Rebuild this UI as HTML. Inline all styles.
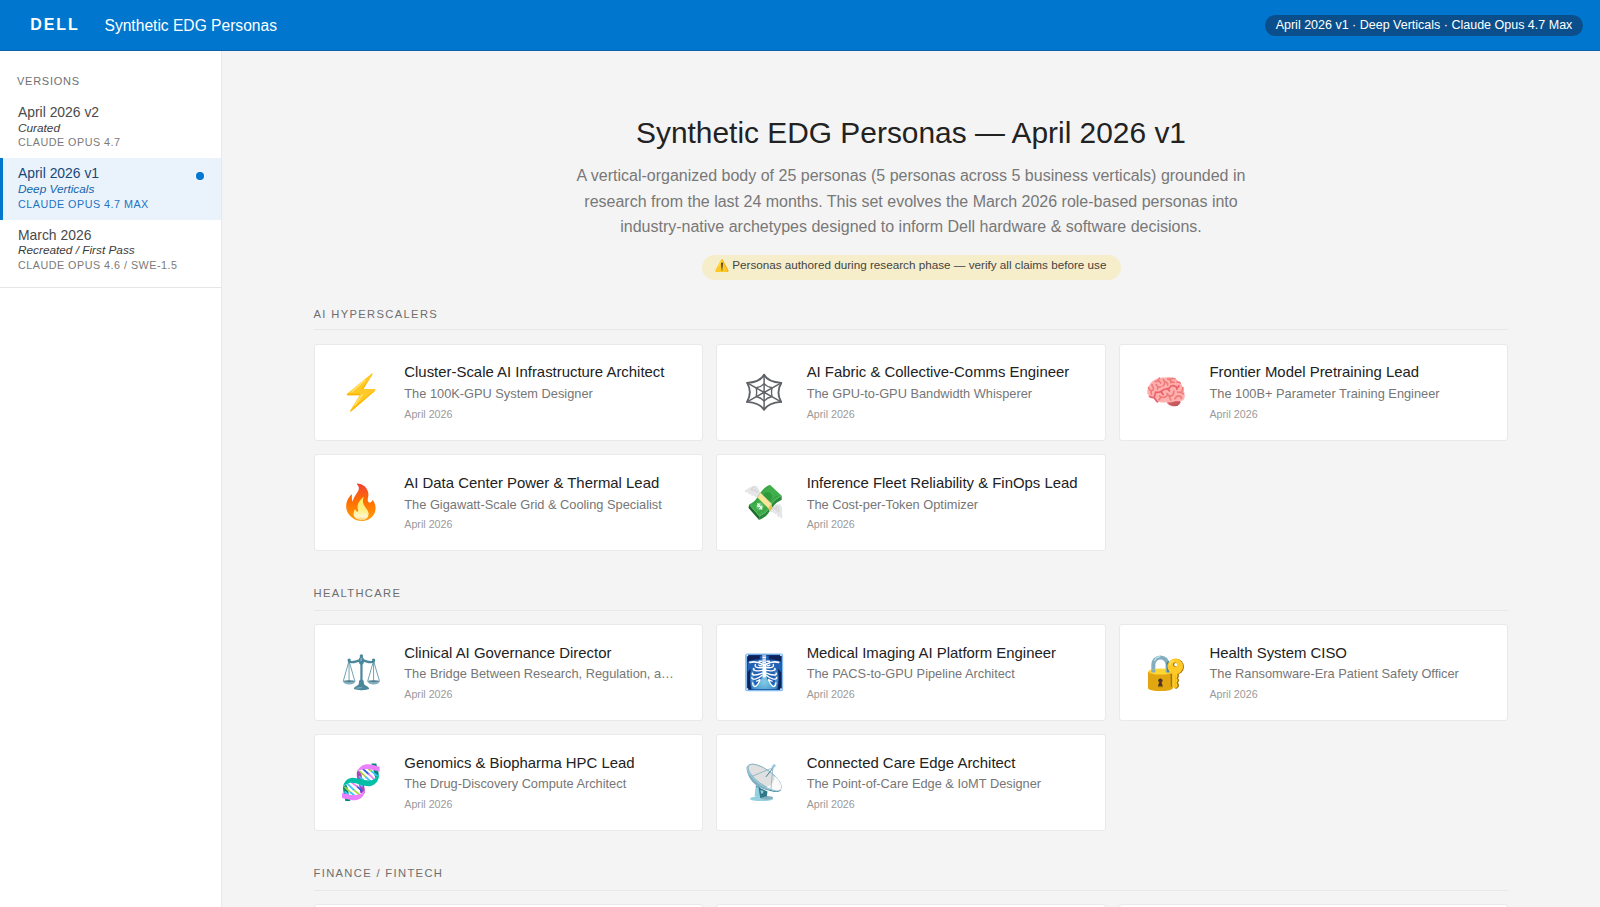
<!DOCTYPE html>
<html lang="en">
<head>
<meta charset="utf-8">
<title>Synthetic EDG Personas</title>
<style>
*{box-sizing:border-box;margin:0;padding:0}
html,body{width:1600px;height:907px;overflow:hidden}
body{font-family:"Liberation Sans",Arial,Helvetica,sans-serif;background:#f4f4f4;color:#222;position:relative}
/* ---------- header ---------- */
header{position:absolute;left:0;top:0;width:1600px;height:51px;background:#0076ce;border-bottom:1px solid #0a62a8;color:#fff;z-index:5}
.logo{position:absolute;left:30.2px;top:15.1px;font-size:16px;line-height:20px;font-weight:700;letter-spacing:1.92px;white-space:nowrap}
.apptitle{position:absolute;left:104.5px;top:15.9px;font-size:15.6px;line-height:20px;white-space:nowrap}
.pill{position:absolute;left:1265px;top:15px;width:318px;height:21px;border-radius:10.5px;background:#0a4f8b;font-size:12.5px;line-height:21.3px;text-align:center;white-space:nowrap}
/* ---------- sidebar ---------- */
aside{position:absolute;left:0;top:51px;width:222px;height:856px;background:#fff;border-right:1px solid #e9e9e9}
.vlabel{position:absolute;left:17px;top:74px;font-size:11px;line-height:14px;letter-spacing:.75px;color:#707070;white-space:nowrap}
.vitem{position:absolute;left:0;width:221px;height:61.3px;padding-left:18px;border-left:0 solid #0076ce}
.vitem b{display:block;font-weight:400;font-size:13.9px;line-height:16px;color:#4a4a4a;padding-top:7.6px;white-space:nowrap}
.vitem i{display:block;font-size:11.8px;line-height:14px;color:#3c3c3c;margin-top:0.5px;white-space:nowrap}
.vitem u{display:block;text-decoration:none;font-size:10.75px;line-height:13px;letter-spacing:.5px;color:#7a7a7a;margin-top:1.3px;white-space:nowrap}
.vitem.on{background:#eaf3fb;border-left-width:3px;padding-left:15px;height:61.7px}
.vitem.on b{padding-top:7.2px}
.vitem.on u{margin-top:2.2px}
.vitem.on b{color:#17477a}
.vitem.on i{color:#1565ac}
.vitem.on u{color:#1b74c4}
.dot{position:absolute;left:193px;top:13.8px;width:8px;height:8px;border-radius:50%;background:#0076ce}
.vend{position:absolute;left:0;top:286.5px;width:221px;height:1px;background:#e6e6e6}
/* ---------- main ---------- */
h1{position:absolute;left:222px;top:115.2px;width:1378px;text-align:center;font-size:29.9px;line-height:36px;font-weight:400;color:#222;white-space:nowrap}
.desc{position:absolute;left:222px;top:163.3px;width:1378px;text-align:center;font-size:16px;line-height:25.5px;color:#787878;white-space:nowrap}
.warn{position:absolute;left:701.5px;top:254.6px;width:419px;height:25px;border-radius:13px;background:#f6edca;color:#444;font-size:11.7px;line-height:26px;white-space:nowrap}
.warn span{position:absolute;left:30.7px;top:-2.4px}
.warn svg{position:absolute;left:13.2px;top:3.1px;width:14.6px;height:14.6px}
.sec{position:absolute;left:314px;width:1194px}
.sec h2{font-size:11.2px;line-height:14px;font-weight:400;letter-spacing:1.344px;color:#6e6e6e;height:25px;border-bottom:1px solid #e8e8e8;white-space:nowrap;text-indent:-.5px}
.grid{position:absolute;left:0;top:38px;width:1194px}
.card{position:absolute;width:389px;height:97px;background:#fff;border:1px solid #e9e9e9;border-radius:3px}
.card svg{position:absolute;left:25.4px;top:25.3px;width:43px;height:43px}
.c2 svg{left:25.7px}.c3 svg{left:24.9px}
.card b{position:absolute;left:89.3px;top:calc(18.2px + var(--tb,0px));font-weight:400;font-size:14.92px;line-height:18px;color:#222;white-space:nowrap}
.card i{position:absolute;left:89.3px;top:calc(40.8px + var(--ti,0px));font-style:normal;font-size:12.8px;line-height:16px;color:#767676;white-space:nowrap;width:272px;overflow:hidden;text-overflow:ellipsis}
.card u{position:absolute;left:89.3px;top:62.4px;text-decoration:none;font-size:10.7px;line-height:14px;color:#9a9a9a;white-space:nowrap}
.c1{left:0}.c2{left:402.33px;width:389.4px}.c3{left:805.17px}
.r1{top:0}.r2{top:110px}
.s1 .r2{--tb:1px;--ti:1px}.s2 .r1,.s2 .r2,.s3 .r1{--tb:1px}
</style>
</head>
<body>
<header>
  <div class="logo">DELL</div>
  <div class="apptitle">Synthetic EDG Personas</div>
  <div class="pill">April 2026 v1 · Deep Verticals · Claude Opus 4.7 Max</div>
</header>

<aside>
  <div class="vlabel" style="top:23.3px">VERSIONS</div>
  <div class="vitem" style="top:45.7px"><b>April 2026 v2</b><i>Curated</i><u>CLAUDE OPUS 4.7</u></div>
  <div class="vitem on" style="top:107px"><b>April 2026 v1</b><i>Deep Verticals</i><u>CLAUDE OPUS 4.7 MAX</u><div class="dot"></div></div>
  <div class="vitem" style="top:168.3px"><b>March 2026</b><i>Recreated / First Pass</i><u>CLAUDE OPUS 4.6 / SWE-1.5</u></div>
  <div class="vend" style="top:235.5px"></div>
</aside>

<h1>Synthetic EDG Personas — April 2026 v1</h1>
<p class="desc">A vertical-organized body of 25 personas (5 personas across 5 business verticals) grounded in<br>research from the last 24 months. This set evolves the March 2026 role-based personas into<br>industry-native archetypes designed to inform Dell hardware &amp; software decisions.</p>
<div class="warn"><svg viewBox="0 0 320 320"><path d="M137 36Q153 18 169 36L291 268Q300 300 272 306H34Q6 300 15 268Z" fill="#f2a600"/><path d="M128 52Q143 36 158 52L272 268Q282 300 255 306H34Q6 300 15 268Z" fill="#ffca28"/><path d="M132 76L84 170" stroke="#fff06a" stroke-width="14" stroke-linecap="round"/><circle cx="76" cy="193" r="7" fill="#fff06a"/><path d="M135 114Q135 96 153 96 171 96 171 114L164 226Q163 236 153 236 143 236 142 226Z" fill="#353535"/><circle cx="153" cy="260" r="14" fill="#2d2d2d"/></svg><span>Personas authored during research phase — verify all claims before use</span></div>

<section class="sec s1" style="top:306px">
  <h2 style="height:24px;padding-top:1px;margin-bottom:1px">AI HYPERSCALERS</h2>
  <div class="grid">
    <div class="card c1 r1"><svg viewBox="0 0 320 320"><path d="M238 25Q243 22 243 29L174 141 258 141Q269 143 263 153L82 308Q74 313 75 304L146 187 56 187Q47 185 52 177Z" fill="#ffca28"/><path d="M243 29L174 141 160 141 206 84 236 36ZM263 153L82 308 77 306 104 276 246 160ZM52 177Q47 185 56 187L146 187 147 175 60 176Z" fill="#ffb300"/><path d="M184 76L86 164M166 183L111 261" stroke="#ffe36c" stroke-width="11" stroke-linecap="round" fill="none"/></svg><b>Cluster-Scale AI Infrastructure Architect</b><i>The 100K-GPU System Designer</i><u>April 2026</u></div>
    <div class="card c2 r1"><svg viewBox="0 0 320 320"><g fill="none" stroke="#5f6368" stroke-linecap="round" stroke-linejoin="round"><path stroke-width="14" d="M157 35Q185 88 285 96Q243 165 284 237Q190 243 157 295Q124 243 30 237Q71 165 31 96Q129 88 157 35Z"/><path stroke-width="10" d="M157 101Q178 126 216 132Q209 165 216 197Q178 206 157 232Q136 206 98 197Q105 165 98 132Q136 126 157 101Z"/><path stroke-width="11" d="M157 35V295M31 96L284 237M285 96L30 237"/></g></svg><b>AI Fabric &amp; Collective-Comms Engineer</b><i>The GPU-to-GPU Bandwidth Whisperer</i><u>April 2026</u></div>
    <div class="card c3 r1"><svg viewBox="0 0 320 320"><path d="M160 241C176 263 206 273 229 270 251 265 262 252 266 234 255 227 240 224 232 226Z" fill="#e0676a"/><path d="M178 246C200 262 225 268 245 262M196 243C215 255 238 258 256 252M214 238C230 245 248 246 262 242" stroke="#9e4e52" stroke-width="5" fill="none"/><path d="M17 165C18 120 45 75 105 59 140 52 160 58 175 52 215 52 255 75 275 115 290 145 298 175 295 205 290 230 265 236 245 228 220 230 200 242 160 240 130 243 100 243 85 233 70 222 65 210 60 205 40 200 18 190 17 165Z" fill="#ffb0ae"/><g fill="none" stroke-linecap="round" stroke-linejoin="round"><path stroke="#e8636a" stroke-width="13" d="M79 165C96 168 115 165 125 155 140 140 165 141 180 135 186 124 196 115 210 117 225 120 235 125 238 134L236 143M238 131C248 128 252 122 252 117M166 141C176 146 180 150 182 155M122 160C125 170 130 178 135 182M79 165C75 185 70 195 68 205 75 215 85 230 92 237M68 205C55 208 40 200 34 197"/><path stroke="#ee7a78" stroke-width="12" d="M108 60C95 70 100 82 100 82M77 87L100 80C108 85 112 92 118 97M135 70C150 80 145 95 145 105 140 112 135 118 131 120M147 88C160 90 172 98 168 112M170 68C185 70 195 78 192 95M185 72C195 62 210 62 222 65M200 85C205 92 215 93 218 93M238 90C250 88 258 92 262 97M52 108C50 125 70 130 62 145 55 155 42 155 45 165L48 180M26 130C30 145 40 152 45 155M82 108C92 115 95 125 98 128L115 125M98 128L92 142M165 175C170 190 180 195 195 193 210 188 215 175 215 158M180 195C185 205 188 215 192 223M222 215C232 195 250 190 262 195 268 200 270 208 270 212M108 195C120 200 130 205 145 203 155 200 160 195 165 190M120 201L105 222M242 163C255 168 265 165 270 165 275 172 278 178 285 177M270 165C278 155 283 140 282 130"/></g></svg><b>Frontier Model Pretraining Lead</b><i>The 100B+ Parameter Training Engineer</i><u>April 2026</u></div>
    <div class="card c1 r2"><svg viewBox="0 0 320 320"><defs><linearGradient id="fg1" x1="0" y1="0" x2="0" y2="1"><stop offset="0" stop-color="#f2403a"/><stop offset=".45" stop-color="#ff6d00"/><stop offset="1" stop-color="#ff9d0a"/></linearGradient><linearGradient id="fg2" x1="0" y1="0" x2="0" y2="1"><stop offset="0" stop-color="#ffe95c"/><stop offset=".6" stop-color="#fff08c"/><stop offset=".85" stop-color="#fff6cf"/><stop offset="1" stop-color="#ffc766"/></linearGradient></defs><path d="M128 26C170 28 205 55 211 100 214 125 203 140 208 158 213 172 232 172 239 154 242 150 245 151 248 155 266 180 270 220 257 248 240 285 200 306 162 306 110 304 65 270 50 225 38 180 52 140 83 109 87 106 89 108 89 113 87 135 88 150 95 162 100 125 125 105 137 78 145 58 138 45 127 33 124 29 125 26 128 26Z" fill="url(#fg1)"/><path d="M176 124C150 145 130 170 130 200 131 215 136 222 135 230 132 238 126 237 122 232 118 225 115 218 112 215 104 228 100 242 101 255 104 282 130 300 165 300 198 298 216 272 212 245 205 215 175 195 171 165 170 148 174 134 176 124Z" fill="url(#fg2)"/></svg><b>AI Data Center Power &amp; Thermal Lead</b><i>The Gigawatt-Scale Grid &amp; Cooling Specialist</i><u>April 2026</u></div>
    <div class="card c2 r2"><svg viewBox="0 0 320 320"><path d="M128 96C120 70 110 48 96 42 70 40 30 65 12 82 14 92 28 95 36 92 34 104 45 108 58 104 56 116 72 120 82 115 84 126 100 132 112 126L126 118Z" fill="#e6e6e8"/><path d="M88 50C70 55 58 65 58 72 62 78 68 72 72 66 70 76 74 84 82 82 86 78 90 72 94 66 92 80 96 92 106 92 110 88 112 82 114 78" stroke="#cfcfd2" stroke-width="6" fill="none" stroke-linecap="round"/><path d="M200 200C215 182 250 176 275 182 288 188 290 205 290 225 290 250 295 270 293 282 288 290 278 285 274 268 272 280 262 282 256 270 252 262 250 255 250 248 246 258 238 258 235 245 230 246 224 244 222 236 215 240 205 238 200 232Z" fill="#e6e6e8"/><path d="M212 200C210 210 215 215 222 212 224 208 226 204 228 200 226 212 232 222 242 218 244 210 246 204 248 198 246 215 250 232 262 236 268 225 266 210 260 196" stroke="#cfcfd2" stroke-width="6" fill="none" stroke-linecap="round"/><path d="M45 182L41 208 120 297 120 268Z" fill="#1c6a2b"/><path d="M120 268C175 250 190 215 212 180 235 150 260 135 288 118L288 147C262 160 238 176 216 206 194 240 176 278 120 297Z" fill="#278a38"/><path d="M200 35C160 50 140 80 128 97 105 130 95 160 45 182L120 268C175 250 190 215 212 180 235 150 260 135 288 118Z" fill="#3fae4b"/><path d="M190 52C160 66 140 100 138 104M72 180C95 168 108 148 112 140M112 245C160 228 175 200 200 168 222 140 240 128 258 118" stroke="#2a8c3a" stroke-width="4" fill="none"/><circle cx="182" cy="124" r="34" fill="#2e9a3e"/><path d="M130 95L213 177 190 212 108 130Z" fill="#fae49a"/><path d="M213 177L190 212 196 238 217 205Z" fill="#f2c150"/><ellipse cx="125" cy="196" rx="30" ry="24" transform="rotate(-38 125 196)" fill="#5cc066"/><g transform="translate(125 196) rotate(-38)" fill="none" stroke="#fff" stroke-width="7" stroke-linecap="round"><path d="M12 -12C6 -20 -10 -20 -12 -9 -13 2 12 -2 12 10 10 22 -8 21 -14 12M0 -26V27"/></g></svg><b>Inference Fleet Reliability &amp; FinOps Lead</b><i>The Cost-per-Token Optimizer</i><u>April 2026</u></div>
  </div>
</section>

<section class="sec s2" style="top:586px">
  <h2>HEALTHCARE</h2>
  <div class="grid">
    <div class="card c1 r1"><svg viewBox="0 0 320 320"><g transform="translate(5.5 4) scale(.966 .975)"><g fill="none" stroke="#4b879b" stroke-linecap="round"><path stroke-width="6" d="M63 82L20 232M64 82V240M65 82L108 232M252 82L208 232M253 82V240M254 82L298 232"/><path stroke-width="18" d="M64 82C85 100 115 82 146 76M254 82C233 100 203 82 172 76"/></g><g fill="#4b879b"><circle cx="159" cy="42" r="13"/><ellipse cx="159" cy="78" rx="20" ry="30"/><rect x="151" y="98" width="17" height="130"/><ellipse cx="159" cy="246" rx="19" ry="24"/><path d="M140 250C138 270 104 274 101 290 104 300 140 303 160 303 180 303 216 300 219 290 216 274 182 270 178 250Z"/><circle cx="65" cy="73" r="13"/><circle cx="253" cy="73" r="13"/></g><path d="M17 232A48 27 0 0 0 113 232Z" fill="#82aec0"/><ellipse cx="65" cy="232" rx="48" ry="6" fill="#a8cbd8"/><ellipse cx="65" cy="233" rx="43" ry="4.500" fill="#2f5f6b"/><path d="M205 232A48 27 0 0 0 301 232Z" fill="#82aec0"/><ellipse cx="253" cy="232" rx="48" ry="6" fill="#a8cbd8"/><ellipse cx="253" cy="233" rx="43" ry="4.500" fill="#2f5f6b"/><path d="M64 228V240M253 228V240" stroke="#4b879b" stroke-width="6" stroke-linecap="round"/><ellipse cx="157" cy="68" rx="7" ry="14" fill="#82aec0" transform="rotate(12 157 68)"/><ellipse cx="142" cy="285" rx="30" ry="5" fill="#82aec0" transform="rotate(-4 142 285)"/></g></svg><b>Clinical AI Governance Director</b><i>The Bridge Between Research, Regulation, and the Bedside</i><u>April 2026</u></div>
    <div class="card c2 r1"><svg viewBox="0 0 320 320"><defs><radialGradient id="xg" gradientUnits="userSpaceOnUse" cx="158" cy="235" r="135"><stop offset="0" stop-color="#84cde4"/><stop offset=".55" stop-color="#4f9fd2"/><stop offset="1" stop-color="#2a68b5"/></radialGradient></defs><rect x="16" y="26" width="283" height="281" rx="15" fill="#86bdf0"/><rect x="30" y="36" width="258" height="261" fill="#0d47a1"/><rect x="34" y="40" width="250" height="252" fill="#0f2259"/><path d="M125 40H192V68C230 70 270 78 284 86V292H34V86C48 78 88 70 125 68Z" fill="#2260b4"/><path d="M34 165L58 140C50 190 52 250 60 292H34ZM284 165L260 140C268 190 266 250 258 292H284Z" fill="#0f2259"/><path d="M158 78C90 80 55 130 55 200 55 240 62 270 70 292H248C256 270 262 240 262 200 262 130 226 80 158 78Z" fill="url(#xg)"/><path d="M120 110C95 120 80 160 78 205 78 240 85 262 95 262 115 240 140 225 140 200V120ZM197 110C222 120 238 160 240 205 240 240 233 262 223 262 203 240 178 225 178 200V120Z" fill="#2260b4"/><g fill="#fff"><rect x="143" y="40" width="29" height="9"/><rect x="143" y="52" width="29" height="12" rx="4"/><rect x="143" y="68" width="29" height="12" rx="4"/><rect x="143" y="84" width="29" height="14" rx="4"/><path d="M145 100H172V190Q172 207 158 207 145 207 145 190Z"/></g><g fill="none" stroke="#fff" stroke-linecap="round" stroke-width="13"><path d="M52 92C85 84 120 92 150 108M265 92C232 84 197 92 167 108"/></g><g fill="none" stroke="#fff" stroke-linecap="round" stroke-width="10"><path d="M145 130C110 136 84 128 92 108M145 152C105 160 68 152 80 138M142 172C105 190 62 192 70 172M140 190C110 220 64 225 66 205M126 220C115 230 105 232 100 232M72 245C72 258 78 268 88 272M96 270C108 262 118 245 126 225M118 112C122 118 130 118 138 116M172 130C207 136 233 128 225 108M172 152C212 160 249 152 237 138M175 172C212 190 255 192 247 172M177 190C207 220 253 225 251 205M191 220C202 230 212 232 217 232M245 245C245 258 239 268 229 272M221 270C209 262 199 245 191 225M199 112C195 118 187 118 179 116M120 84H140M177 84H197"/></g><g fill="#dcebf7"><rect x="26" y="33" width="13" height="13" rx="3"/><rect x="276" y="32" width="13" height="13" rx="3"/><rect x="26" y="285" width="13" height="13" rx="3"/><rect x="276" y="285" width="13" height="13" rx="3"/></g></svg><b>Medical Imaging AI Platform Engineer</b><i>The PACS-to-GPU Pipeline Architect</i><u>April 2026</u></div>
    <div class="card c3 r1"><svg viewBox="0 0 320 320"><path d="M62 165V108A53 53 0 0 1 168 108V167" fill="none" stroke="#84aec0" stroke-width="30"/><path d="M72 78C78 62 95 52 110 50" fill="none" stroke="#b9e4ea" stroke-width="9" stroke-linecap="round"/><path d="M22 160V282A93 24 0 0 0 208 282V160Z" fill="#e2a610"/><ellipse cx="115" cy="160" rx="90" ry="23" fill="#fdd835"/><path d="M47 163V143H77V165A15 4 0 0 1 47 163ZM153 165V143H183V160A15 5 0 0 1 153 165Z" fill="#84aec0"/><path d="M160 110C160 90 168 85 177 82L183 165 166 168Z" fill="#3d8394"/><g fill="#9e740b"><circle cx="116" cy="230" r="16"/><path d="M109 240L96 272Q96 277 101 277H129Q134 277 133 272L122 240Z"/></g><g fill="#4e342e"><circle cx="114" cy="227" r="15"/><path d="M107 238L97 268H131L121 238Z"/></g><path d="M190 178H204V278L192 272Z" fill="#9e740b"/><circle cx="232" cy="124" r="58" fill="#9e740b"/><path d="M212 170H252V200C246 204 244 210 250 216 256 222 256 230 250 236 244 242 246 248 252 254V274L236 288 226 288 212 276Z" fill="#9e740b"/><circle cx="225" cy="122" r="58" fill="#ffca28"/><path d="M203 172H241V200C235 204 233 210 239 216 245 222 245 230 239 236 233 242 235 248 241 254V272L228 287 203 272Z" fill="#ffca28"/><path d="M222 185Q226 180 226 190V282L222 280Z" fill="#e2a610"/><circle cx="224" cy="109" r="16" fill="#9e740b"/><circle cx="229" cy="109" r="11.500" fill="#fff"/><path d="M184 110C186 95 198 84 212 80" fill="none" stroke="#fff59d" stroke-width="7" stroke-linecap="round"/></svg><b>Health System CISO</b><i>The Ransomware-Era Patient Safety Officer</i><u>April 2026</u></div>
    <div class="card c1 r2"><svg viewBox="0 0 320 320"><path d="M233 26H270L288 100 266 138 256 112 249 76ZM22 200L46 180 60 215 65 255 77 306H40L26 242Z" fill="#00897b"/><path d="M146 85C128 130 176 190 166 247" fill="none" stroke="#ab47bc" stroke-width="36"/><g fill="none" stroke-width="13" stroke-linecap="round"><path stroke="#a4d93a" d="M150 86L195 130M215 70L238 86M100 220L145 258M38 203L80 242"/><path stroke="#40c4ff" d="M195 130L225 156M238 86L270 115M145 125L175 150M55 175L100 220M80 242L105 262M38 238L60 258M150 182L163 195"/><path stroke="#2b5ce0" d="M172 68L215 106M125 195L162 230"/><path stroke="#ea80fc" d="M215 106L255 145M90 170L125 195"/></g><path d="M22 200C28 160 60 132 92 132 140 134 190 160 235 150 265 140 280 118 288 98L290 122C284 165 250 195 210 195 160 192 110 162 75 170 50 176 34 188 22 200Z" fill="#00bfa5"/><path d="M128 88C140 50 175 32 205 32 240 34 270 42 295 50L295 88C260 78 230 68 200 67 175 66 150 72 128 88ZM15 245C50 255 90 263 115 261 150 258 170 245 184 222 186 260 160 295 115 300 80 300 45 290 15 282Z" fill="#ea80fc"/></svg><b>Genomics &amp; Biopharma HPC Lead</b><i>The Drug-Discovery Compute Architect</i><u>April 2026</u></div>
    <div class="card c2 r2"><svg viewBox="0 0 320 320"><ellipse cx="138" cy="288" rx="87" ry="18" fill="#94d1e0"/><ellipse cx="176" cy="281" rx="48" ry="14" fill="#84aec0"/><path d="M94 198A14 14 0 0 1 122 195L130 284 86 270Z" fill="#94d1e0"/><path d="M112 182L122 190 126 208 182 234 178 270 128 283Z" fill="#2f7889"/><path d="M130 224L153 231 148 248 135 251Z" fill="#94d1e0"/><ellipse cx="103" cy="199" rx="5" ry="7" fill="#3b8799"/><path d="M26 52C25 112 70 182 130 207 190 236 262 246 286 222L150 90Z" fill="#84aec0"/><path d="M190 224C225 238 262 244 284 226 260 236 225 232 205 222Z" fill="#2f7889"/><g transform="rotate(35.900 157 130)"><ellipse cx="157" cy="130" rx="152" ry="62" fill="#94d1e0"/><ellipse cx="160" cy="126" rx="147" ry="56" fill="#e0e0e0" stroke="#84aec0" stroke-width="6"/><path d="M215 74A147 56 0 0 1 215 178C235 150 235 100 215 74Z" fill="#fafafa"/></g><g fill="none" stroke-linecap="round" stroke-width="6"><path stroke="#84aec0" d="M75 118L224 57M208 216L222 62"/><path stroke="#2f7889" stroke-width="7" d="M173 123L217 67"/></g><rect x="214" y="39" width="28" height="15" rx="7" transform="rotate(-45 228 46)" fill="#94d1e0" stroke="#84aec0" stroke-width="4"/></svg><b>Connected Care Edge Architect</b><i>The Point-of-Care Edge &amp; IoMT Designer</i><u>April 2026</u></div>
  </div>
</section>

<section class="sec s3" style="top:866px">
  <h2>FINANCE / FINTECH</h2>
  <div class="grid">
    <div class="card c1 r1"></div>
    <div class="card c2 r1"></div>
    <div class="card c3 r1"></div>
  </div>
</section>
</body>
</html>
